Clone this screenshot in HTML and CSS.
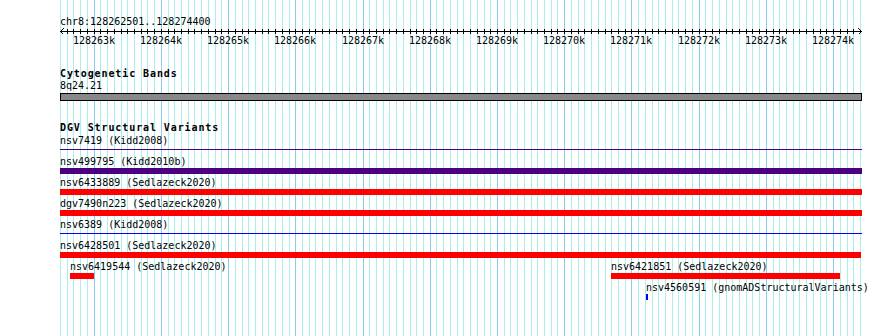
FILE: index.html
```html
<!DOCTYPE html>
<html lang="en">
<head>
    <meta charset="UTF-8">
    <meta name="viewport" content="width=device-width, initial-scale=1.0">
    <title>chr8:128262501..128274400</title>
    <link rel="stylesheet" href="styles.css">
</head>
<body>
    <div class="view">
        <div class="gridlines" id="gridlines">
            <!-- gridlines are inserted here -->
        </div>

        <div class="view-content">
            <div class="locus">chr8:128262501..128274400</div>

            <div class="ruler">
                <svg class="scale" id="scale" width="803" height="7"></svg>
                <div class="scale-labels" id="scaleLabels"></div>
            </div>

            <div class="track">
                <div class="track-label">Cytogenetic Bands</div>
                <div class="band-name">8q24.21</div>
                <div class="band"></div>
            </div>

            <div class="track track-dgv">
                <div class="track-label">DGV Structural Variants</div>
                <div class="features" id="features"></div>
            </div>
        </div>
    </div>

    <script>
        const viewStart = 128262500;
        const viewEnd = 128274400;
        const viewWidth = 800;
        const maxWidth = 802;
        const pxPerBp = viewWidth / (viewEnd - viewStart);

        function bpToX(bp) {
            return Math.max(0, Math.min(maxWidth, Math.round((bp - viewStart) * pxPerBp)));
        }

        // Gridlines and ruler ticks, every 100bp
        const gridlines = document.getElementById("gridlines");
        const scale = document.getElementById("scale");
        const scaleLabels = document.getElementById("scaleLabels");
        let svg = '<line x1="0" y1="3.5" x2="802" y2="3.5" />';
        svg += '<polyline points="3.5,0.5 0.5,3.5 3.5,6.5" />';
        svg += '<polyline points="798.5,0.5 801.5,3.5 798.5,6.5" />';

        for (let bp = viewStart; bp <= viewEnd; bp += 100) {
            const x = bpToX(bp);
            const major = bp % 1000 === 0;

            const line = document.createElement("div");
            line.className = major ? "gridline major" : "gridline";
            line.style.left = x + "px";
            gridlines.appendChild(line);

            if (x > 2 && x < 799) {
                svg += `<line x1="${x + 0.5}" y1="1" x2="${x + 0.5}" y2="6" />`;
            }

            if (major) {
                const label = document.createElement("span");
                label.className = "scale-label";
                label.style.left = x + "px";
                label.textContent = (bp / 1000) + "k";
                scaleLabels.appendChild(label);
            }
        }
        scale.innerHTML = svg;

        // DGV features, one array per row
        const rows = [
            [{ name: "nsv7419 (Kidd2008)", start: 128262000, end: 128274430, glyph: "line", color: "#4b0082" }],
            [{ name: "nsv499795 (Kidd2010b)", start: 128262000, end: 128274430, glyph: "bar", color: "#4b0082" }],
            [{ name: "nsv6433889 (Sedlazeck2020)", start: 128262000, end: 128274430, glyph: "bar", color: "#ff0000" }],
            [{ name: "dgv7490n223 (Sedlazeck2020)", start: 128262000, end: 128274430, glyph: "bar", color: "#ff0000" }],
            [{ name: "nsv6389 (Kidd2008)", start: 128262000, end: 128274430, glyph: "line", color: "#0000ff" }],
            [{ name: "nsv6428501 (Sedlazeck2020)", start: 128262000, end: 128274415, glyph: "bar", color: "#ff0000" }],
            [
                { name: "nsv6419544 (Sedlazeck2020)", start: 128262649, end: 128263006, glyph: "bar", color: "#ff0000" },
                { name: "nsv6421851 (Sedlazeck2020)", start: 128270696, end: 128274103, glyph: "bar", color: "#ff0000" }
            ],
            [{ name: "nsv4560591 (gnomADStructuralVariants)", start: 128271217, end: 128271247, glyph: "bar", color: "#0000ff" }]
        ];

        const featuresEl = document.getElementById("features");
        rows.forEach(row => {
            const rowEl = document.createElement("div");
            rowEl.className = "feature-row";
            row.forEach(f => {
                const left = bpToX(f.start);
                const width = Math.max(2, bpToX(f.end) - left);
                const el = document.createElement("div");
                el.className = "feature";
                el.style.left = left + "px";
                el.innerHTML = `
                    <div class="feature-label">${f.name}</div>
                    <div class="glyph glyph-${f.glyph}" style="width: ${width}px; background-color: ${f.color};"></div>
                `;
                rowEl.appendChild(el);
            });
            featuresEl.appendChild(rowEl);
        });
    </script>
</body>
</html>
```

FILE: styles.css
```css
body {
    margin: 0;
    background: #ffffff;
    font-family: "DejaVu Sans Mono", "Liberation Mono", monospace;
    font-size: 10px;
    color: #000000;
}

.view {
    position: relative;
    width: 802px;
    height: 336px;
    margin-left: 60px;
    overflow: visible;
}

.gridlines {
    position: absolute;
    top: 0;
    bottom: 0;
    left: 0;
    width: 802px;
}

.gridline {
    position: absolute;
    top: 0;
    bottom: 0;
    width: 1px;
    background: #aaeeee;
}

.gridline.major {
    background: #88ccee;
}

.view-content {
    position: relative;
}

.locus {
    padding-top: 16px;
    line-height: 12px;
}

.scale {
    display: block;
    stroke: #000000;
    stroke-width: 1;
    fill: none;
    shape-rendering: crispEdges;
}

.scale-labels {
    position: relative;
    height: 12px;
    line-height: 12px;
}

.scale-label {
    position: absolute;
    top: 0;
    transform: translateX(-50%);
}

.track {
    margin-top: 21px;
}

.track-label {
    font-weight: bold;
    letter-spacing: 0.9px;
    line-height: 12px;
    white-space: nowrap;
}

.band-name {
    line-height: 12px;
}

.band {
    margin-top: 1px;
    width: 800px;
    height: 6px;
    background: #888888;
    border: 1px solid #000000;
}

.features {
    margin-top: 1px;
}

.feature-row {
    position: relative;
    height: 21px;
}

.feature {
    position: absolute;
    top: 0;
}

.feature-label {
    line-height: 12px;
    white-space: nowrap;
}

.glyph-bar {
    height: 6px;
}

.glyph-line {
    height: 1px;
    margin-top: 2px;
}
```
